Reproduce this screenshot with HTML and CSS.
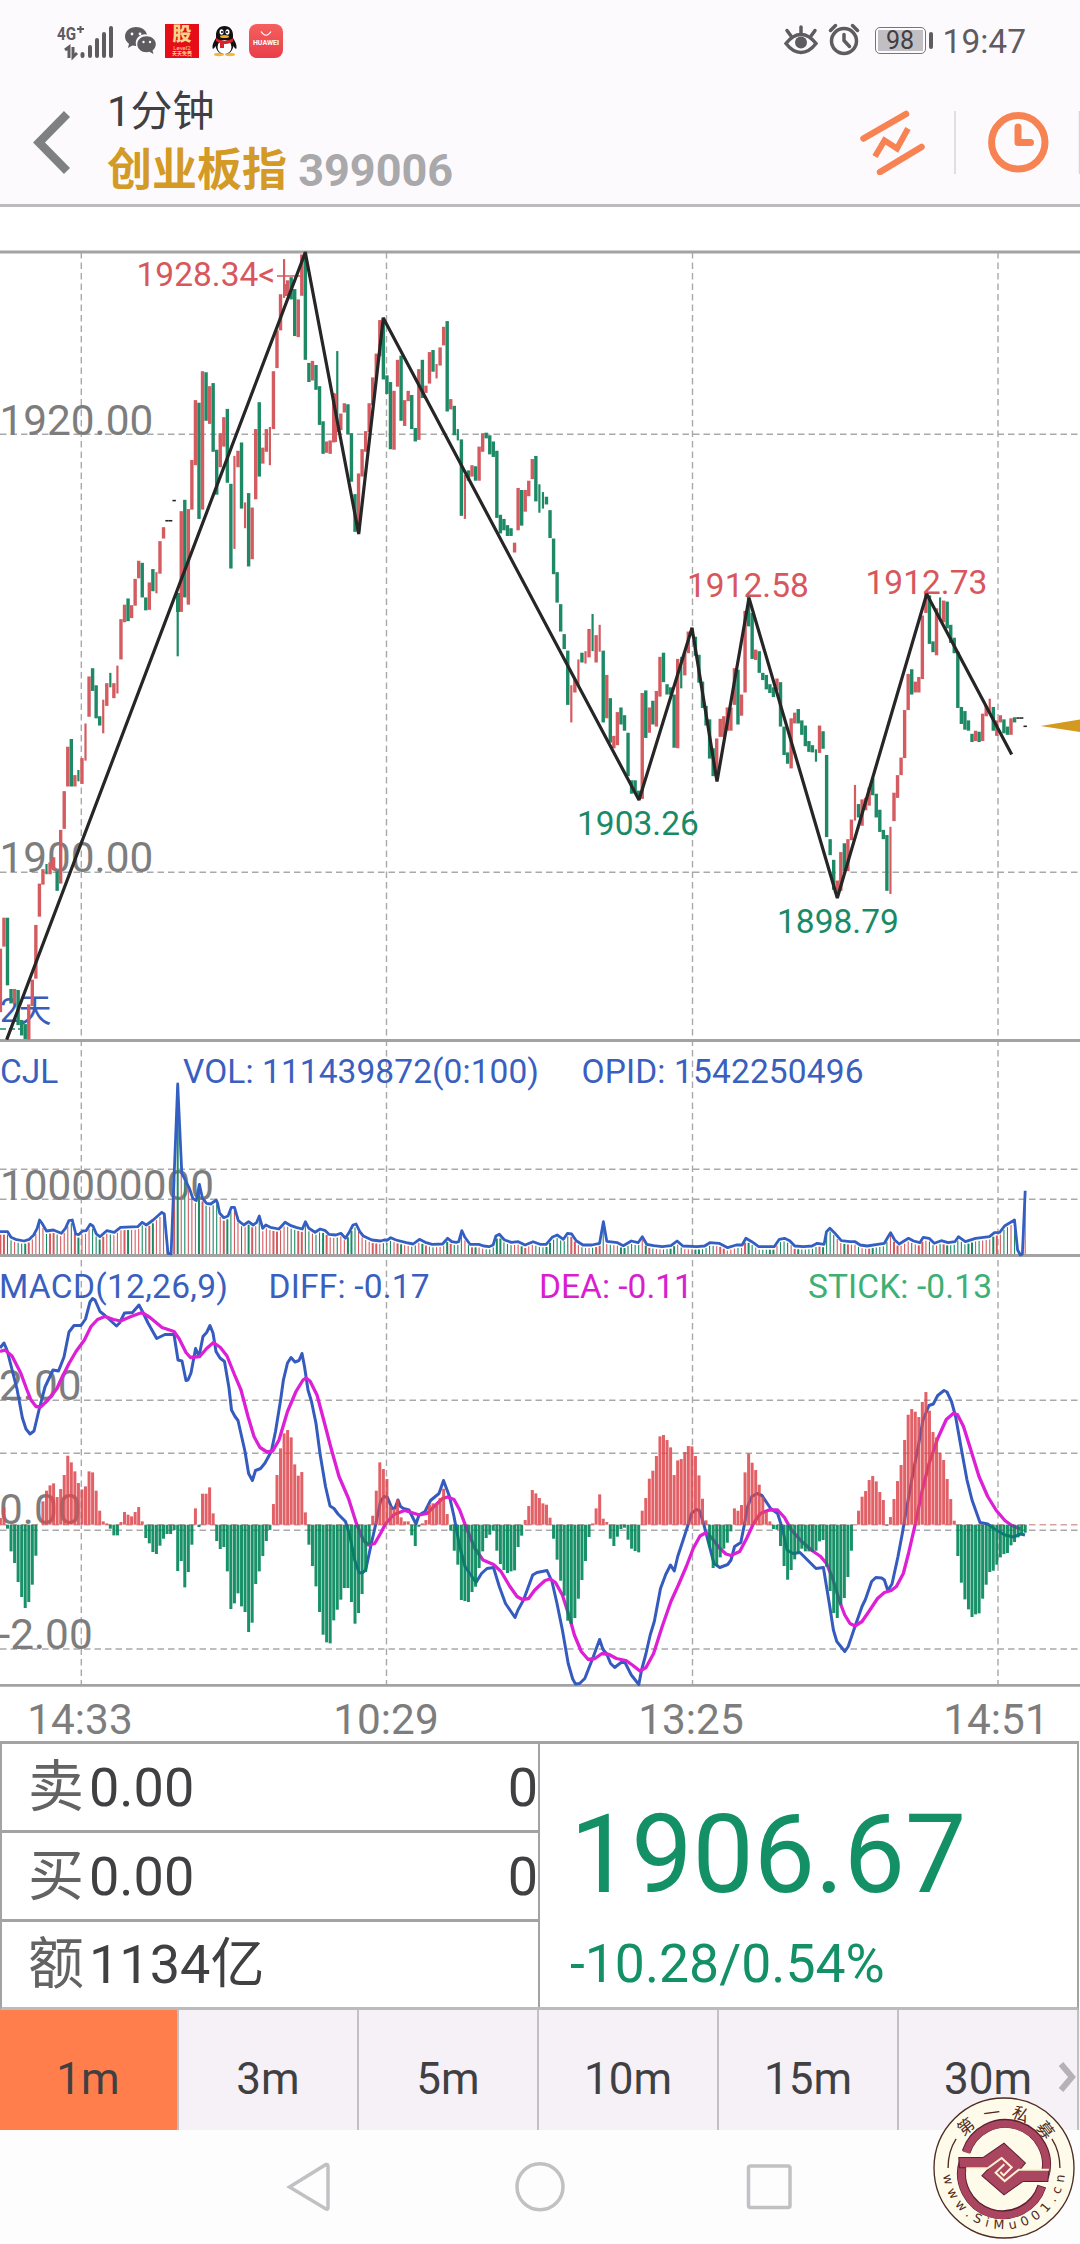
FILE: index.html
```html
<!DOCTYPE html>
<html lang="zh-CN">
<head>
    <meta charset="UTF-8">
    <meta name="viewport" content="width=device-width, initial-scale=1.0">
    <title>创业板指 399006</title>
    <link rel="stylesheet" href="styles.css">
</head>
<body>
    <div class="status-bar">
        <div class="status-left">
            <svg class="icon-signal" width="58" height="36" viewBox="57 22 58 36">
                <text x="57" y="39" class="signal-text" textLength="19" lengthAdjust="spacingAndGlyphs">4G</text>
                <path d="M77 28h7M80.500 25v7" stroke-width="2"/>
                <path d="M65 49l4-3v11M73 46v10l4-4" stroke-width="3"/>
                <path d="M82.500 53v2M90 46v9M97 39v16M104 33v22M111 27v28" stroke-width="4" stroke-linecap="round"/>
            </svg>
            <svg class="icon-wechat" width="32" height="30" viewBox="0 0 32 30">
                <path d="M11 1C5 1 0 5 0 10.500c0 3 1.500 5.500 4 7.200L3 22l4.500-2.400c1.200.3 2.400.4 3.700.4A9 9 0 0 1 22 8.500C21 4 16.500 1 11 1z"/>
                <path d="M21.500 10.200c-5 0-9.200 3.500-9.200 8s4.200 8 9.200 8c1 0 2-.2 3-.4l4 2.200-1-3.500c2-1.500 3.300-3.700 3.300-6.300 0-4.500-4.200-8-9.300-8z"/>
                <g fill="#fdfafe"><circle cx="7" cy="8" r="1.400"/><circle cx="15" cy="8" r="1.400"/><circle cx="18.500" cy="16" r="1.200"/><circle cx="25" cy="16" r="1.200"/></g>
            </svg>
            <div class="app-stock"><b>股</b><span>Level2</span><i>天天免费</i></div>
            <svg class="icon-qq" width="25" height="32" viewBox="0 0 25 32">
                <ellipse cx="7" cy="29.500" rx="5" ry="1.700" fill="#f0b83c"/>
                <ellipse cx="18" cy="29.500" rx="5" ry="1.700" fill="#f0b83c"/>
                <path d="M12.500 1C7 1 4 5 4 10v3c-2 3-4 7-3.500 10 .5 2 2 0 3-2 1 5 4 8 9 8s8-3 9-8c1 2 2.500 4 3 2 .5-3-1.500-7-3.500-10v-3c0-5-3-9-8.500-9z" fill="#111"/>
                <ellipse cx="12.500" cy="22" rx="7" ry="7" fill="#fff"/>
                <path d="M4 13c5 3.500 12 3.500 17 0v3.500c-3 2-6 2.500-9 2.500v4H8v-5c-2-.5-4-2-4-2z" fill="#d9222a"/>
                <ellipse cx="9.500" cy="7" rx="2" ry="2.800" fill="#fff"/><ellipse cx="15.500" cy="7" rx="2" ry="2.800" fill="#fff"/>
                <circle cx="10" cy="7" r="1"/><circle cx="15" cy="7" r="1"/>
                <ellipse cx="12.500" cy="11.500" rx="4.500" ry="1.500" fill="#f0a830"/>
            </svg>
            <div class="app-huawei">
                <svg width="12" height="6" viewBox="0 0 12 6"><path d="M1 .5q5 7.500 10 0" fill="none" stroke="#fff" stroke-width="1.200"/></svg>
                <span>HUAWEI</span>
            </div>
        </div>
        <div class="status-right">
            <svg class="icon-eye" width="34" height="32" viewBox="0 0 34 32">
                <path d="M2 19.500q7-9 15-9t15 9q-7 9-15 9t-15-9z"/>
                <circle cx="17" cy="18.500" r="6" class="dot"/>
                <path d="M17 9V3M7 12L3 6.500M27 12l4-5.500" stroke-linecap="round"/>
            </svg>
            <svg class="icon-alarm" width="32" height="34" viewBox="0 0 32 34">
                <circle cx="16" cy="18" r="12.500"/>
                <path d="M16 11.500v6l5.500 6M2.500 7.500l5-5M29.500 7.500l-5-5" stroke-linecap="round"/>
            </svg>
            <div class="battery"><span>98</span></div>
            <span class="clock">19:47</span>
        </div>
    </div>

    <div class="header">
        <svg class="icon-back" width="42" height="66" viewBox="30 109 42 66">
            <path d="M67 114L39 142.500L67 171"/>
        </svg>
        <div class="title">
            <div class="period">1分钟</div>
            <div class="name">创业板指 <span>399006</span></div>
        </div>
        <svg class="icon-tools" width="220" height="66" viewBox="860 109 220 66">
            <path d="M863.500 141L906 116.500M880 174.500L921.500 149.500" stroke-width="6.500" stroke-linecap="round" transform="translate(0 -2.500)"/>
            <path d="M875 156.500L884.500 140.500L897 148.500L908 128.500" stroke-width="6"/>
            <circle cx="1018.300" cy="142.300" r="26.700" stroke-width="7"/>
            <path d="M1018 127v15.500h12.500" stroke-width="7" stroke-linecap="round" stroke-linejoin="round"/>
            <path d="M955 111v63M1079.500 111v63" stroke="#d8d5da" stroke-width="1.500"/>
        </svg>
    </div>

    <svg class="chart" width="1080" height="1534" viewBox="0 207 1080 1534">
        <g class="grid">
            <path d="M81.300 252V1684M386.500 252V1684M692.500 252V1684M998 252V1684"/>
            <path d="M0 434.300H1080M0 872.300H1080M0 1169.300H1080M0 1199.300H1080M0 1400.300H1080M0 1453.300H1080M0 1530.300H1080M0 1649H1080"/>
            <path d="M0 1524.700H1080" class="zero"/>
        </g>
        <g class="border">
            <path d="M0 252H1080M0 1040.500H1080M0 1255.500H1080M0 1685.300H1080"/>
        </g>
        <g class="axis">
            <text x="-0.500" y="434.500">1920.00</text>
            <text x="-0.500" y="872">1900.00</text>
            <text x="0" y="1199.500">100000000</text>
            <text x="-1" y="1399.500">2.00</text>
            <text x="-1" y="1524">0.00</text>
            <text x="-1.500" y="1648.500">-2.00</text>
            <g text-anchor="middle">
                <text x="80" y="1733.500">14:33</text>
                <text x="386" y="1733.500">10:29</text>
                <text x="691" y="1733.500">13:25</text>
                <text x="996" y="1733.500">14:51</text>
            </g>
        </g>
        <g class="marks">
            <text x="136.500" y="285.500" class="up">1928.34&lt;</text>
            <text x="687" y="597" class="up">1912.58</text>
            <text x="865.500" y="593.500" class="up">1912.73</text>
            <text x="577" y="835" class="down">1903.26</text>
            <text x="777" y="933" class="down">1898.79</text>
            <text x="0" y="1022" class="days">2天</text>
            <path d="M277 276H302" stroke="#d8575d" stroke-width="1.500"/>
            <path d="M0 1029H22" stroke="#1a8a66" stroke-width="1.500" stroke-dasharray="6 3"/>
        </g>
        <g id="candles"></g>
        <polyline class="zigzag" points="6.7,1039.6 305.3,252.500 358.7,534 383.300,318 639,800 692,628 717,781.500 749,598 837.300,898 926.700,594 1011.700,754.500"/>
        <path d="M1040.500 726L1080 719.500V732z" fill="#d4991f"/>

        <g class="marks blue">
            <text x="0" y="1082.500">CJL</text>
            <text x="183" y="1082.500" textLength="356">VOL: 111439872(0:100)</text>
            <text x="581.500" y="1082.500" textLength="282">OPID: 1542250496</text>
            <text x="-1" y="1297.500" textLength="229">MACD(12,26,9)</text>
            <text x="268.500" y="1297.500" textLength="161">DIFF: -0.17</text>
            <text x="539" y="1297.500" class="dea-text">DEA: -0.11</text>
            <text x="808" y="1297.500" class="stick-text" textLength="184">STICK: -0.13</text>
        </g>
        <g id="volumes"></g>

        <polyline class="diff" points="0,1348 4,1343 7,1350 17,1389 22.4,1418 26,1429 30,1434 34,1431 38.5,1412 45,1387 53,1370 58.5,1371 64,1357 69,1332 74,1325.5 81,1325.5 85.5,1319 90,1302 92.6,1298.5 95,1300 100,1311.5 105,1315.5 116.5,1326 119.5,1323 124.5,1313 132.5,1312.5 139,1305 143,1312.5 148,1323 156.7,1338.5 165,1334.5 174,1334.5 178,1360 182,1361 186,1380.5 188,1380 191,1373 195.6,1348.5 199,1356.5 203,1336.5 206.6,1332.5 210,1325.5 213,1333 216,1351.5 220,1358 224.5,1361.5 229,1388 231.5,1410 235,1416.5 238,1420.5 245,1451.5 248.6,1473.5 252.4,1480.5 255.5,1470.5 260.6,1468.5 265,1463 271.3,1451.5 275.5,1431.5 280.6,1400 283.4,1380 287.5,1363 291,1357.5 295,1362 299,1360.5 302,1353.5 304.5,1366.5 308,1390 311.5,1401.5 316,1423.5 320,1453.5 325.5,1486.5 330,1506 334,1508.5 338,1514 345.5,1521.5 350,1536.5 354.7,1560 359,1572.5 362,1573 365.7,1570 371,1545 376,1523 380.5,1501.5 384,1496.5 387.5,1497.5 392,1508.5 395,1508 398,1500 400.5,1506.5 403.5,1508.5 409,1510 416,1524 419,1515 425,1511.5 430.5,1500.5 439,1493.5 443.5,1480.5 449.5,1496.5 454,1516.5 459.7,1546.5 465,1566.5 476,1582.5 481.5,1573.5 487,1568.5 493.5,1567.5 499.3,1586.5 505.5,1603.5 515,1617.5 518,1610 523.5,1600 532.7,1575 537,1572.5 547,1570.5 552,1581.5 557,1603.5 562.4,1630 568.2,1663.5 572.7,1679 575.5,1684 579.6,1683.5 584.8,1678.5 593.4,1656.5 599.6,1639.5 603,1649.5 606.5,1653.5 610.6,1663.5 614.7,1667.5 621,1662.5 625,1662.5 631.3,1675 638.8,1684.5 641.6,1670 646,1653.5 650.2,1635 654.3,1621.5 660.5,1588.5 665.7,1574.5 670.5,1565 674.3,1571 677.7,1556.5 683,1540.5 688,1525 691.5,1513.5 696,1509.5 699.4,1510.5 703.6,1523.5 708.7,1543.5 714,1563.5 719.8,1567.5 727.7,1564.5 731,1560 734.6,1546.5 740.8,1542.5 744,1526.5 747.6,1506.5 751.8,1496.5 757,1493.5 762,1495.5 770.7,1508.5 777.6,1513.5 782.8,1530 787,1550 793,1553.5 800,1552.5 810,1562.5 816,1568.5 823.4,1567.5 829.3,1603.5 833.4,1630 836.8,1641.5 844.8,1651.5 848.2,1646.5 855,1626.5 862,1606.5 865.4,1599.5 871.6,1581.5 875.8,1577.5 881.6,1578 884.4,1580 887.8,1590.5 892,1584 898,1556.5 902.3,1533.5 905.7,1513.5 913.6,1470 918.8,1443.5 923,1420 929,1405.5 933.3,1404 937.7,1395.5 944,1390.5 947,1392 951.5,1401.5 955.6,1416.5 961.8,1451.5 967,1480 972,1500 980,1522.5 987.7,1524 994.5,1529 1004.9,1535 1013.5,1537 1020.4,1534 1025,1535"/>
        <polyline class="dea" points="0,1351.5 5,1350 12,1356 20.7,1373 27,1390 31,1400 36,1406.5 40.6,1407 48,1400 57,1388.5 60,1381.5 69,1363.5 76,1351.5 84.4,1340 91,1326.5 97.5,1319.5 105,1316.5 113.6,1319.5 120.5,1321 131,1316.5 142,1312.5 150,1317.5 162,1327.5 174,1331.5 179,1338.5 186,1352.5 190.4,1357.5 199.7,1356.5 206.6,1348.5 213.5,1342.5 220.4,1347.5 227,1356 234,1373.5 241,1390 248,1416.5 254,1436.5 260,1447.5 267,1452 272.7,1451 279,1440 287.5,1411.5 296,1391.5 303,1380 306,1378 310,1381 317,1395 323.7,1420 330.6,1446.5 339,1476.5 348.5,1498.5 356.4,1523.5 363.3,1540 368.5,1545 374.7,1543.5 380.5,1533.5 385.7,1523.5 394,1514.5 404.6,1510.5 411.5,1512.5 419.4,1515 427,1513.5 434.6,1506 442.5,1498.5 447.7,1497 454,1499.5 459.7,1510 466.6,1528.5 475,1548.5 483,1560 493.5,1564.5 501,1571.5 509.6,1586 517,1596.5 522.4,1599.5 528.6,1598.5 534.4,1590.5 540,1585 545,1580.5 550.3,1579 555.5,1582.5 562.4,1595 569.3,1616.5 574.4,1635 581.3,1651.5 588.2,1659.5 595,1658.5 602,1653.5 609,1654.5 616.4,1658.5 626,1660.5 633,1665.5 639.9,1671 646,1667.5 653.6,1653.5 662.2,1626.5 670.9,1601.5 678.4,1585 686.3,1566.5 693.2,1548.5 700,1536 706.3,1532.5 712.2,1538.5 719,1547.5 726,1554 731,1555.5 739.7,1551.5 746.6,1538.5 753.5,1523.5 760.4,1513.5 769,1510 777.6,1510 784.5,1517.5 791.4,1530 801.7,1541.5 812,1550.5 820.6,1556.5 826.5,1563.5 832.7,1578.5 839.6,1601.5 844.8,1615 850,1623.5 855,1626 862,1621.5 868.9,1611.5 877.5,1598.5 884.4,1592.5 891.2,1590.5 896.4,1586.5 903.3,1573.5 908.5,1553.5 915.4,1523.5 922.3,1490 929.1,1463.5 937.7,1438.5 946.3,1419.5 953.2,1413.5 957.4,1414.5 963.5,1426.5 970.4,1448.5 979,1476.5 987.7,1496.5 996.3,1510.5 1004.9,1520.5 1011.8,1525.5 1020.4,1529"/>
        <g id="sticks"></g>
    </svg>

    <div class="quote">
        <div class="quote-rows">
            <div class="row"><label>卖</label><span>0.00</span><em>0</em></div>
            <div class="row"><label>买</label><span>0.00</span><em>0</em></div>
            <div class="row"><label>额</label><span>1134亿</span></div>
        </div>
        <div class="quote-price">
            <div class="price">1906.67</div>
            <div class="change">-10.28/0.54%</div>
        </div>
    </div>

    <div class="tabs">
        <div class="tab active">1m</div>
        <div class="tab">3m</div>
        <div class="tab">5m</div>
        <div class="tab">10m</div>
        <div class="tab">15m</div>
        <div class="tab">30m
            <svg class="more" width="20" height="34" viewBox="0 0 20 34"><path d="M4 4l11 13L4 30"/></svg>
        </div>
    </div>

    <div class="nav-bar">
        <svg width="1080" height="114" viewBox="0 2130 1080 114">
            <path d="M289.500 2187L326 2164.500Q328 2164 328 2166.500V2207.500Q328 2210 326 2209z"/>
            <circle cx="540" cy="2186.700" r="23"/>
            <rect x="748.500" y="2166" width="41.500" height="41.500" rx="2"/>
        </svg>
    </div>

    <svg class="logo" width="142" height="142" viewBox="69 53 424 424">
        <circle cx="281" cy="265" r="209" fill="#fffbea" stroke="#4f2c22" stroke-width="4"/>
        <path d="M114 265Q114 215 138 178M448 265Q448 215 424 178" fill="none" stroke="#4f2c22" stroke-width="4"/>
        <g fill="none" stroke="#5c1f33" stroke-width="27">
            <path d="M168 217A122 122 0 0 1 402 292"/>
            <path d="M394 319A122 122 0 0 1 160 244"/>
        </g>
        <g fill="none" stroke="#ab4660" stroke-width="22">
            <path d="M168 219A122 122 0 0 1 402 294"/>
            <path d="M394 321A122 122 0 0 1 160 246"/>
        </g>
        <path d="M146 234H218L281 191L345 250L328 271H415L412 305H338L281 345L215 288L238 264H148z" fill="#ab4660" stroke="#5c1f33" stroke-width="3"/>
        <path d="M168 266H232L274 235L304 263L280 287L270 277M415 270H325L283 304L256 279L282 254" fill="none" stroke="#fff3cf" stroke-width="6"/>
        <path id="arcTop" d="M132 265A149 149 0 0 1 430 265" fill="none"/>
        <path id="arcBottom" d="M98 265A183 183 0 0 0 464 265" fill="none"/>
        <text class="logo-cn"><textPath href="#arcTop" startOffset="54%" text-anchor="middle">第一私募</textPath></text>
        <text class="logo-url"><textPath href="#arcBottom" startOffset="51.500%" text-anchor="middle">www.SiMu001.cn</textPath></text>
    </svg>

    <script src="chart.js"></script>
</body>
</html>
```
FILE: styles.css
```css
body {
    margin: 0;
    width: 1080px;
    height: 2244px;
    position: relative;
    overflow: hidden;
    background-color: #fff;
    font-family: Roboto, "Noto Sans CJK SC", sans-serif;
    color: #404043;
}
.status-bar {
    height: 82px;
    box-sizing: border-box;
    padding: 0 54px 0 57px;
    background-color: #fdfafe;
    display: flex;
    justify-content: space-between;
}
.status-left,
.status-right {
    display: flex;
    align-items: center;
    height: 82px;
}
.icon-signal {
    overflow: visible;
    fill: none;
    stroke: #5f5c61;
    margin-right: 10px;
}
.signal-text {
    font-size: 19px;
    font-weight: bold;
    fill: #5f5c61;
    stroke: none;
}
.icon-wechat {
    fill: #5f5c61;
    margin-right: 8px;
}
.app-stock {
    width: 34px;
    height: 34px;
    background-color: #e60d18;
    color: #f7d48c;
    display: flex;
    flex-direction: column;
    align-items: center;
    margin-right: 13px;
}
.app-stock b {
    font-size: 19px;
    line-height: 22px;
    font-weight: 900;
}
.app-stock span {
    font-size: 6px;
    line-height: 4px;
}
.app-stock i {
    font-size: 5px;
    line-height: 7px;
    font-style: normal;
    font-weight: bold;
}
.icon-qq {
    margin-right: 12px;
}
.app-huawei {
    width: 34px;
    height: 34px;
    border-radius: 8px;
    background: linear-gradient(#f4605f, #e93e49);
    color: #fff;
    text-align: center;
    display: flex;
    flex-direction: column;
    align-items: center;
    padding-top: 7px;
    box-sizing: border-box;
}
.app-huawei span {
    font-size: 7px;
    line-height: 12px;
    font-weight: bold;
}
.icon-eye,
.icon-alarm {
    fill: none;
    stroke: #5f5c61;
    stroke-width: 3.5;
}
.icon-eye {
    margin: -2px 10px 0 0;
}
.icon-eye .dot {
    fill: #5f5c61;
    stroke: none;
}
.icon-alarm {
    margin: -2px 15px 0 0;
}
.battery {
    position: relative;
    width: 51px;
    height: 27px;
    box-sizing: border-box;
    border: 1.5px solid #77747a;
    border-radius: 5px;
    padding: 2px;
    margin-right: 17px;
    margin-top: -2px;
}
.battery span {
    display: block;
    height: 21px;
    background-color: #c2bfc4;
    font-size: 25px;
    line-height: 22px;
    text-align: center;
}
.battery::after {
    content: "";
    position: absolute;
    left: 53px;
    top: 4px;
    width: 4px;
    height: 17px;
    border-radius: 2px;
    background-color: #5f5c61;
}
.clock {
    font-size: 33.5px;
    color: #5f5c61;
}
.header {
    height: 125px;
    box-sizing: border-box;
    border-bottom: 3px solid #bbb;
    background-color: #fdfafe;
    display: flex;
}
.icon-back {
    margin: 27px 0 0 30px;
    fill: none;
    stroke: #7f8180;
    stroke-width: 8.5;
}
.title {
    margin-left: 35px;
    flex: 1;
}
.period {
    font-size: 42px;
    line-height: 60px;
    height: 58px;
}
.name {
    font-size: 45px;
    line-height: 62px;
    font-weight: bold;
    color: #d39a25;
    white-space: nowrap;
}
.name span {
    color: #a9a8ab;
}
.icon-tools {
    margin-top: 27px;
    fill: none;
    stroke: #f88352;
}
.chart {
    display: block;
    overflow: visible;
}
.grid path {
    fill: none;
    stroke: #a9a9a9;
    stroke-width: 1.4;
    stroke-dasharray: 6.5 4;
}
.grid .zero {
    stroke: #d9a0a0;
}
.border path {
    stroke: #a3a3a3;
    stroke-width: 2.8;
}
.axis text {
    font-size: 42.3px;
    fill: #7d7d7d;
}
.marks text {
    font-size: 33.5px;
}
.marks .up {
    fill: #d8575d;
}
.marks .down {
    fill: #1a8a66;
}
.marks .days {
    font-size: 33px;
    fill: #3a5bb8;
}
.blue {
    fill: #3a5fbe;
}
.blue .dea-text {
    fill: #d81fd0;
}
.blue .stick-text {
    fill: #3db075;
}
.candle-up {
    fill: #d45c61;
}
.candle-down {
    fill: #1d8a65;
}
.candle-flat {
    fill: #222;
}
.zigzag {
    fill: none;
    stroke: #262626;
    stroke-width: 3.2;
    stroke-linejoin: bevel;
}
.volume-line {
    fill: none;
    stroke: #345fc2;
    stroke-width: 2.8;
    stroke-linejoin: round;
}
.diff {
    fill: none;
    stroke: #345bbd;
    stroke-width: 3;
    stroke-linejoin: round;
}
.dea {
    fill: none;
    stroke: #dd1fd6;
    stroke-width: 3.3;
    stroke-linejoin: round;
}
.stick-up {
    fill: #dc4a50;
    fill-opacity: 0.87;
}
.stick-down {
    fill: #008558;
    fill-opacity: 0.9;
}
.quote {
    position: relative;
    height: 269px;
    box-sizing: border-box;
    margin-right: 1px;
    border: 2px solid #a3a3a3;
    border-top-width: 3px;
    border-bottom: 3px solid #bbb;
    display: flex;
}
.quote-rows {
    width: 538px;
    box-sizing: border-box;
    border-right: 2px solid #a3a3a3;
}
.row {
    height: 89px;
    box-sizing: border-box;
    border-bottom: 3px solid #a3a3a3;
    display: flex;
    align-items: center;
    padding-left: 26px;
    line-height: 85px;
    font-size: 54px;
}
.row:last-child {
    border-bottom: none;
    height: 85px;
}
.row label {
    width: 61px;
    font-size: 56px;
    color: #636363;
}
.row em {
    margin-left: auto;
    margin-right: 0;
    font-style: normal;
}
.quote-price {
    color: #139065;
    padding: 47px 0 0 30px;
}
.price {
    font-size: 109px;
    line-height: 128px;
}
.change {
    font-size: 53.5px;
    line-height: 62px;
    margin-top: 14px;
}
.tabs {
    height: 120px;
    display: flex;
    margin-left: -1px;
    background-color: #f5f1f6;
}
.tab {
    position: relative;
    width: 180px;
    box-sizing: border-box;
    border-right: 2px solid #c3c0c4;
    font-size: 44px;
    line-height: 138px;
    text-align: center;
}
.tab.active {
    background-color: #ff7e4b;
}
.tab .more {
    position: absolute;
    right: 0;
    top: 50px;
    fill: none;
    stroke: #b5b2b6;
    stroke-width: 6;
}
.nav-bar {
    height: 114px;
    background-color: #fefdfe;
}
.nav-bar svg {
    fill: none;
    stroke: #c1c0c2;
    stroke-width: 3.5;
}
.logo {
    position: absolute;
    left: 933px;
    top: 2097px;
}
.logo-cn {
    font-size: 50px;
    fill: #4f2c22;
    letter-spacing: 28px;
}
.logo-url {
    font-family: "DejaVu Sans", sans-serif;
    font-size: 38px;
    fill: #4f2c22;
    letter-spacing: 16px;
}
```
FILE: chart.js
```js
const SVG_NS = "http://www.w3.org/2000/svg";
const STEP = 3.546;

// x of the bar with the given index
function barX(i) {
    return 0.4 + i * STEP;
}

function addRect(parent, cls, x, y, w, h) {
    const rect = document.createElementNS(SVG_NS, "rect");
    rect.setAttribute("class", cls);
    rect.setAttribute("x", x.toFixed(2));
    rect.setAttribute("y", y.toFixed(2));
    rect.setAttribute("width", w);
    rect.setAttribute("height", h.toFixed(2));
    parent.appendChild(rect);
}

// r = up, g = down, k = flat, then the top and bottom of the bar
const candles = `r1372-1495 r1312-1368 g1312-1443 g1450-1478 r1450-1478 g1452-1520 g1510-1540 g1518-1547 r1480-1548 r1432-1483
r1326-1430 r1246-1310 r1218-1248 g1208-1228 r1205-1228 r1195-1220 g1222-1260 r1142-1246 r1067-1140 r981-1058
g966-1058 r1036-1058 g1026-1048 r1003-1053 r936-1008 r845-923 g829-873 g862-926 g922-940 r890-955
r858-902 g838-866 r858-887 r824-878 r734-812 r706-740 g694-738 r707-732 r656-708 r621-655
g625-692 g692-717 r663-716 g637-680 r643-684 r583-646 r556-578 k542-545 k542-545 k503-506
g683-806 r525-720 g503-692 r521-706 r426-522 r310-436 g315-540 r254-522 g256-350 r283-356
g277-410 g406-493 r374-440 r343-400 g327-470 g472-636 r418-598 r408-440 g392-520 r508-558
g490-632 r518-618 r366-502 g314-458 r402-433 r366-410 r362-436 r254-366 r175-248 r105-175
r37-112 r78-108 g72-115 g95-186 r115-188 r28-108 g22-232 g238-275 r234-272 g242-290
g283-358 g351-414 r390-412 r388-414 r296-392 g215-372 r336-368 r316-334 g318-376 g374-468
g492-565 r452-565 r405-458 r370-410 r316-372 r266-320 r220-270 r155-225 g150-270 g262-298
g275-405 r292-406 r232-284 g224-350 r310-360 r292-312 g300-366 g364-390 r250-387 g232-306
r282-296 r217-278 g213-255 r240-268 r208-243 r168-204 g157-332 r308-328 g321-378 g366-388
g386-534 r455-540 g446-466 r436-458 g438-466 r400-466 r374-410 g373-384 g378-415 g390-420
g408-538 g532-568 g540-562 g552-573 g558-573 r586-605 r480-562 g484-553 r484-526 r466-496
r424-463 g418-506 g473-528 g488-520 g497-512 g523-577 g578-647 g643-702 g705-758 g763-792
g795-900 r862-934 r850-876 r812-864 g799-818 r796-820 r753-808 g724-796 r765-818 r745-797
g795-934 r842-926 g887-973 r960-984 r914-978 g905-938 g920-950 g954-1038 g1046-1072 g1046-1070
g1066-1083 r877-1082 g872-964 r905-954 g892-938 r873-942 r807-884 g799-856 g860-880 g866-880
g880-983 r811-984 g807-868 r800-843 r758-800 r750-765 g768-805 g803-857 g855-906 g902-940
g928-1004 g984-1038 r965-1040 r927-962 r922-962 r905-950 r905-950 r829-900 g832-938 r880-921
r718-876 g690-748 g722-811 r793-813 g796-838 g838-852 g842-870 g860-877 g866-885 r849-872
g856-942 g942-997 g992-1014 r926-1023 r915-936 g908-936 g930-958 g940-980 g970-991 g978-992
g986-1010 r940-993 g951-985 g997-1156 g1160-1191 g1200-1258 r1240-1270 r1185-1260 g1168-1222 r1160-1222
r1122-1162 r1055-1124 g1092-1118 r1083-1134 r1080-1104 r1060-1095 g1042-1075 g1072-1118 g1103-1146 g1142-1160
g1152-1260 r1136-1266 r1070-1125 r1036-1080 r1002-1036 r910-1003 r840-910 g831-880 r855-876 r846-876
r727-850 r684-722 g688-782 g777-798 r713-804 g692-738 r698-740 g700-752 g745-780 g770-800
g797-906 g904-937 g912-948 g930-950 g956-972 r950-970 g952-972 r917-970 r902-922 r888-916
g904-950 r930-960 r920-934 g928-955 g942-958 r926-958 g924-934 k924-927 k924-927 k940-943`.split(/\s+/);

// bars that are only a thin wick wide
const thin = [13, 22, 24, 29, 31, 33, 44, 50, 66, 69, 76, 80, 95, 123, 129, 131, 152, 153, 161, 163, 165, 167, 169, 192, 230, 241, 251, 265, 279];
const classes = { r: "candle-up", g: "candle-down", k: "candle-flat" };

const candleGroup = document.getElementById("candles");
candles.forEach((c, i) => {
    const [top, bottom] = c.slice(1).split("-").map(v => 240 + v / 1.936);
    const w = thin.includes(i) ? 2.2 : 3.4;
    addRect(candleGroup, classes[c[0]], barX(i) - w / 2, top, w, bottom - top);
});
// bodies of the bars with long wicks
addRect(candleGroup, "candle-down", 176, 593, 4, 19);
addRect(candleGroup, "candle-up", 283, 284, 5, 12);
addRect(candleGroup, "candle-up", 333.500, 394, 3.500, 48);

// volume outline, left and right half of the pane
const volLeft = "0,605 22,605 32,622 45,628 70,633 85,628 98,615 108,595 115,570 122,580 135,603 155,600 178,610 190,595 200,572 210,570 220,612 228,614 240,603 250,602 262,583 270,588 280,612 290,620 310,602 332,607 350,592 400,590 413,577 425,585 445,570 470,547 477,552 488,670 497,672 516,162 528,430 538,450 550,475 560,505 570,512 579,463 588,505 600,520 612,522 628,510 632,520 638,550 650,563 662,558 672,532 681,532 692,572 708,585 722,575 735,585 745,578 753,558 763,595 772,585 785,592 810,597 828,577 845,587 860,592 878,597 887,575 897,595 915,607 930,597 945,602 955,613 975,615 990,610 1003,625 1015,605 1025,585 1034,582 1045,605 1055,618 1080,630 1105,633 1115,630 1125,630 1135,623 1150,630 1180,638 1200,642 1218,628 1235,637 1255,643 1285,642 1300,625 1312,635 1325,637 1332,635 1341,602 1350,622 1365,643 1390,643 1405,648 1420,650 1432,645 1440,618 1450,613 1465,630 1485,637 1505,635 1525,645 1548,635";
const volRight = "0,643 18,643 35,622 50,615 68,628 80,610 92,612 105,632 125,645 150,645 173,640 184,575 194,634 225,638 242,647 265,633 285,638 297,620 310,643 330,647 355,650 380,647 398,633 415,648 455,650 478,648 493,638 520,640 545,653 570,645 587,645 598,625 615,635 635,650 680,650 695,628 710,625 725,632 740,648 765,650 790,648 805,640 825,643 832,605 842,595 855,608 875,632 900,635 915,635 930,645 950,648 980,643 1000,640 1010,622 1018,608 1030,630 1043,642 1070,625 1085,633 1103,638 1113,622 1130,625 1145,640 1165,632 1185,638 1205,635 1215,620 1235,635 1265,625 1305,620 1320,608 1335,607 1350,587 1378,570 1387,660 1395,675 1401,672 1409,482";

function parsePoints(str, left) {
    return str.split(" ").map(p => {
        const [x, y] = p.split(",").map(Number);
        return [left + x / 2.904, 1030 + y / 3];
    });
}
const volume = parsePoints(volLeft, 0).concat(parsePoints(volRight, 540));

function volumeAt(x) {
    for (let i = 1; i < volume.length; i++) {
        const [x0, y0] = volume[i - 1];
        const [x1, y1] = volume[i];
        if (x <= x1) {
            return y0 + (y1 - y0) * (x - x0) / (x1 - x0);
        }
    }
    return volume[volume.length - 1][1];
}

const volumeGroup = document.getElementById("volumes");
candles.forEach((c, i) => {
    const top = volumeAt(barX(i)) + 3;
    if (top < 1254) {
        const w = i % 7 < 2 ? 2 : 1.1;
        addRect(volumeGroup, c[0] === "g" ? "candle-down" : "candle-up", barX(i) - w / 2, top, w, 1254 - top);
    }
});
const line = document.createElementNS(SVG_NS, "polyline");
line.setAttribute("class", "volume-line");
line.setAttribute("points", volume.map(p => p.map(v => v.toFixed(1)).join(",")).join(" "));
volumeGroup.appendChild(line);

// MACD histogram, thirds of a pixel above or below the zero line
const sticks = [
    20, 52, -12, -80, -115, -172, -217, -250, -232, -180, -93, 0, 70, 102, 118, 124, 83, 107, 149, 207,
    187, 160, 125, 106, 115, 160, 157, 102, 42, 10, 4, -12, -32, -32, 8, 38, 30, 25, 38, 53,
    10, -40, -56, -82, -88, -63, -42, -28, -28, -16, -139, -109, -188, -142, -60, 49, -7, 93, 93, 112,
    34, -49, -73, -67, -140, -253, -236, -206, -245, -262, -322, -294, -178, -140, -94, -49, -16, 62, 149, 229,
    274, 284, 262, 181, 147, 158, 37, -60, -124, -185, -262, -330, -353, -356, -287, -255, -225, -190, -190, -232,
    -297, -265, -208, -142, -60, 27, 102, 187, 167, 137, 55, 48, 76, 22, 10, 10, -32, -64, -6, 4,
    14, 60, 64, 65, 80, 108, 32, -18, -78, -120, -226, -229, -232, -202, -186, -130, -80, -40, -30, -18,
    -78, -118, -136, -145, -140, -137, -67, -33, 14, 56, 104, 94, 80, 64, 60, 21, -42, -105, -168, -213,
    -288, -298, -280, -222, -166, -109, -37, 4, 49, 91, 18, 8, -42, -64, -36, -13, -9, -45, -72, -79,
    -83, 42, 80, 138, 162, 206, 265, 269, 254, 232, 149, 193, 197, 218, 236, 235, 206, 148, 78, 13,
    -67, -130, -124, -98, -72, -54, -20, 49, 42, 59, 157, 213, 186, 164, 120, 84, 40, 10, -13, -15,
    -64, -124, -165, -136, -104, -84, -72, -80, -80, -82, -78, -50, -46, -126, -199, -265, -280, -240, -220, -157,
    -78, 0, 42, 84, 101, 134, 146, 130, 98, 74, -3, 23, 77, 131, 179, 254, 330, 347, 339, 323,
    368, 398, 342, 278, 262, 216, 194, 137, 77, 12, -94, -174, -224, -254, -277, -269, -266, -222, -180, -142,
    -138, -120, -98, -88, -85, -62, -52, -38, -30, -24
];
const stickGroup = document.getElementById("sticks");
sticks.forEach((v, i) => {
    const h = Math.abs(v) / 3;
    addRect(stickGroup, v > 0 ? "stick-up" : "stick-down", barX(i) - 1.5, v > 0 ? 1524.7 - h : 1524.7, 3, h);
});
```
